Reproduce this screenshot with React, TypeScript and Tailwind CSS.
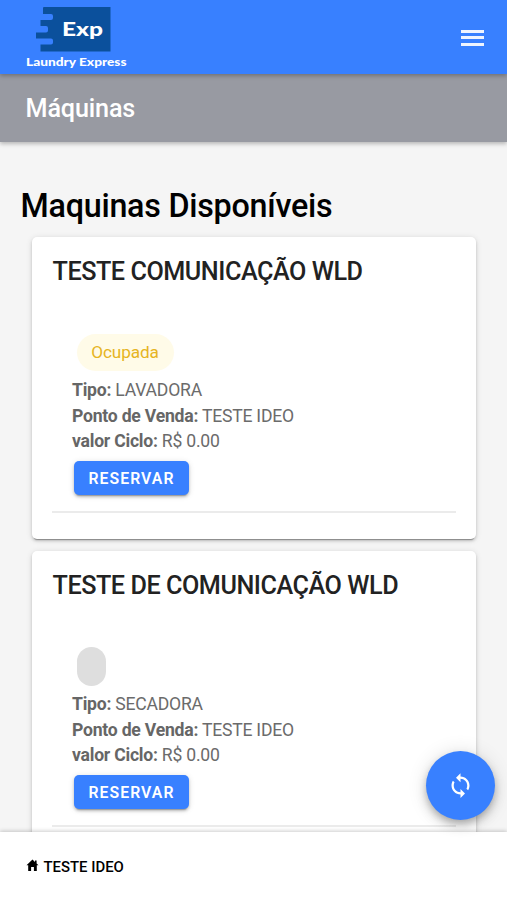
type Machine = { name: string; status: string; kind: string };

const machines: Machine[] = [
  { name: "TESTE COMUNICAÇÃO WLD", status: "Ocupada", kind: "LAVADORA" },
  { name: "TESTE DE COMUNICAÇÃO WLD", status: "", kind: "SECADORA" },
];

function Logo() {
  return (
    <svg className="block h-[74px] w-[140px]" viewBox="0 0 140 74">
      <path
        d="M44 7H110.500V51.500H40.500V44.500H51a2 2 0 0 0 2-2V40.500a2 2 0 0 0-2-2H36V32.500H46a2 2 0 0 0 2-2V28a2 2 0 0 0-2-2H40.500V20H51a2 2 0 0 0 2-2V16a2 2 0 0 0-2-2H43V8a1 1 0 0 1 1-1Z"
        fill="#0b509c"
      />
      <text x="62" y="35.500" textLength="41" lengthAdjust="spacingAndGlyphs" fill="#fff" fontFamily="Lato, sans-serif" fontWeight="900" fontSize="19.500">
        Exp
      </text>
      <text x="26" y="66" textLength="100.500" lengthAdjust="spacingAndGlyphs" fill="#fff" fontFamily="Lato, sans-serif" fontWeight="900" fontSize="11">
        Laundry Express
      </text>
    </svg>
  );
}

function MachineCard({ machine }: { machine: Machine }) {
  return (
    <article className="h-[302px] shrink-0 rounded-[5px] bg-white px-5 pt-[19px] shadow-[0_3px_1px_-2px_rgba(0,0,0,0.3),0_2px_3px_rgba(0,0,0,0.16),0_1px_6px_rgba(0,0,0,0.12)]">
      <h2 className="h-8 whitespace-nowrap pl-[0.500px] text-[25.200px] font-medium leading-8 tracking-[-0.460px] text-[#222]">{machine.name}</h2>
      <div className="mt-[45px] flex h-[40px] pl-[25px]">
        {machine.status ? (
          <span className="mt-px flex h-[37px] w-[97px] items-center justify-center rounded-full bg-[#fffbe8] pr-px text-[17.200px] tracking-[-0.100px] text-[#e6b422]">
            {machine.status}
          </span>
        ) : (
          <span className="h-[39px] w-[29px] rounded-full bg-[#dedede]" />
        )}
      </div>
      <div className="mt-[5px] pl-5 text-[17.600px] leading-[25.700px] tracking-[-0.230px] text-[#6b6b6b]">
        <p className="whitespace-nowrap"><b className="text-[#666]">Tipo:</b> {machine.kind}</p>
        <p className="whitespace-nowrap"><b className="text-[#666]">Ponto de Venda:</b> TESTE IDEO</p>
        <p className="whitespace-nowrap"><b className="text-[#666]">valor Ciclo:</b> R$ 0.00</p>
      </div>
      <button className="ml-[22px] mt-[6px] block h-[34px] w-[115px] rounded-[5px] bg-[#3880ff] pt-px text-[15.800px] font-semibold tracking-[1.050px] text-white shadow-[0_3px_1px_-2px_rgba(0,0,0,0.2),0_2px_3px_rgba(0,0,0,0.2),0_1px_6px_rgba(0,0,0,0.12)]">
        RESERVAR
      </button>
      <div className="mt-4 h-[2px] bg-[#ebebeb]" />
    </article>
  );
}

export default function App() {
  return (
    <div className="relative flex h-[900px] w-[507px] flex-col overflow-hidden bg-[#f5f5f5] font-[Roboto,sans-serif]">
      <header className="z-20 flex h-[74px] shrink-0 items-center justify-between bg-[#3880ff] pr-[23px] shadow-[0_2px_4px_rgba(0,0,0,0.25)]">
        <Logo />
        <button aria-label="Menu" className="mt-px flex w-[23px] flex-col gap-[3.500px]">
          <span className="h-[3px] bg-[#eef4ff]" />
          <span className="h-[3px] bg-[#eef4ff]" />
          <span className="h-[3px] bg-[#eef4ff]" />
        </button>
      </header>
      <div className="z-10 flex h-[68px] shrink-0 items-center bg-[#989aa2] pl-[25.500px] pt-px text-[25.200px] font-medium tracking-[-0.150px] text-white shadow-[0_2px_4px_rgba(0,0,0,0.25)]">
        Máquinas
      </div>
      <main className="flex min-h-0 flex-1 flex-col overflow-hidden px-8 pt-[43px]">
        <h1 className="-ml-[11.500px] h-[42px] whitespace-nowrap text-[32.300px] font-medium leading-[42px] tracking-[-0.250px] text-black">Maquinas Disponíveis</h1>
        <div className="mr-[-1px] mt-[10px] flex flex-col gap-3">
          {machines.map((m) => (
            <MachineCard key={m.name} machine={m} />
          ))}
        </div>
      </main>
      <footer className="z-10 flex h-[68px] shrink-0 items-center bg-white pl-[26px] pt-[3px] shadow-[0_-1px_4px_rgba(0,0,0,0.2)]">
        <svg className="mb-1 h-[13px] w-[13px]" viewBox="0 0 13 13">
          <path d="M6.500 0.500 0.500 6.300H2.200V12H5.100V8H7.900V12H10.800V6.300H12.500L10.600 4.400V1.500H9V2.900Z" fill="#000" />
        </svg>
        <span className="ml-[4.500px] whitespace-nowrap text-[14.900px] font-medium text-black">TESTE IDEO</span>
      </footer>
      <button
        aria-label="Atualizar"
        className="absolute left-[426px] top-[751px] z-30 flex h-[69px] w-[69px] items-center justify-center rounded-full bg-[#3880ff] shadow-[0_4px_7px_-1px_rgba(0,0,0,0.2),0_6px_12px_rgba(0,0,0,0.14),0_1px_20px_rgba(0,0,0,0.12)]"
      >
        <svg className="h-[27px] w-[27px]" viewBox="0 0 24 24" fill="#fff">
          <path d="M12 4V1L8 5l4 4V6c3.310 0 6 2.690 6 6 0 1.010-.25 1.970-.7 2.800l1.460 1.460C19.540 15.030 20 13.570 20 12c0-4.420-3.580-8-8-8zm0 14c-3.310 0-6-2.690-6-6 0-1.010.25-1.970.7-2.800L5.240 7.740C4.460 8.970 4 10.430 4 12c0 4.420 3.580 8 8 8v3l4-4-4-4v3z" />
        </svg>
      </button>
    </div>
  );
}
